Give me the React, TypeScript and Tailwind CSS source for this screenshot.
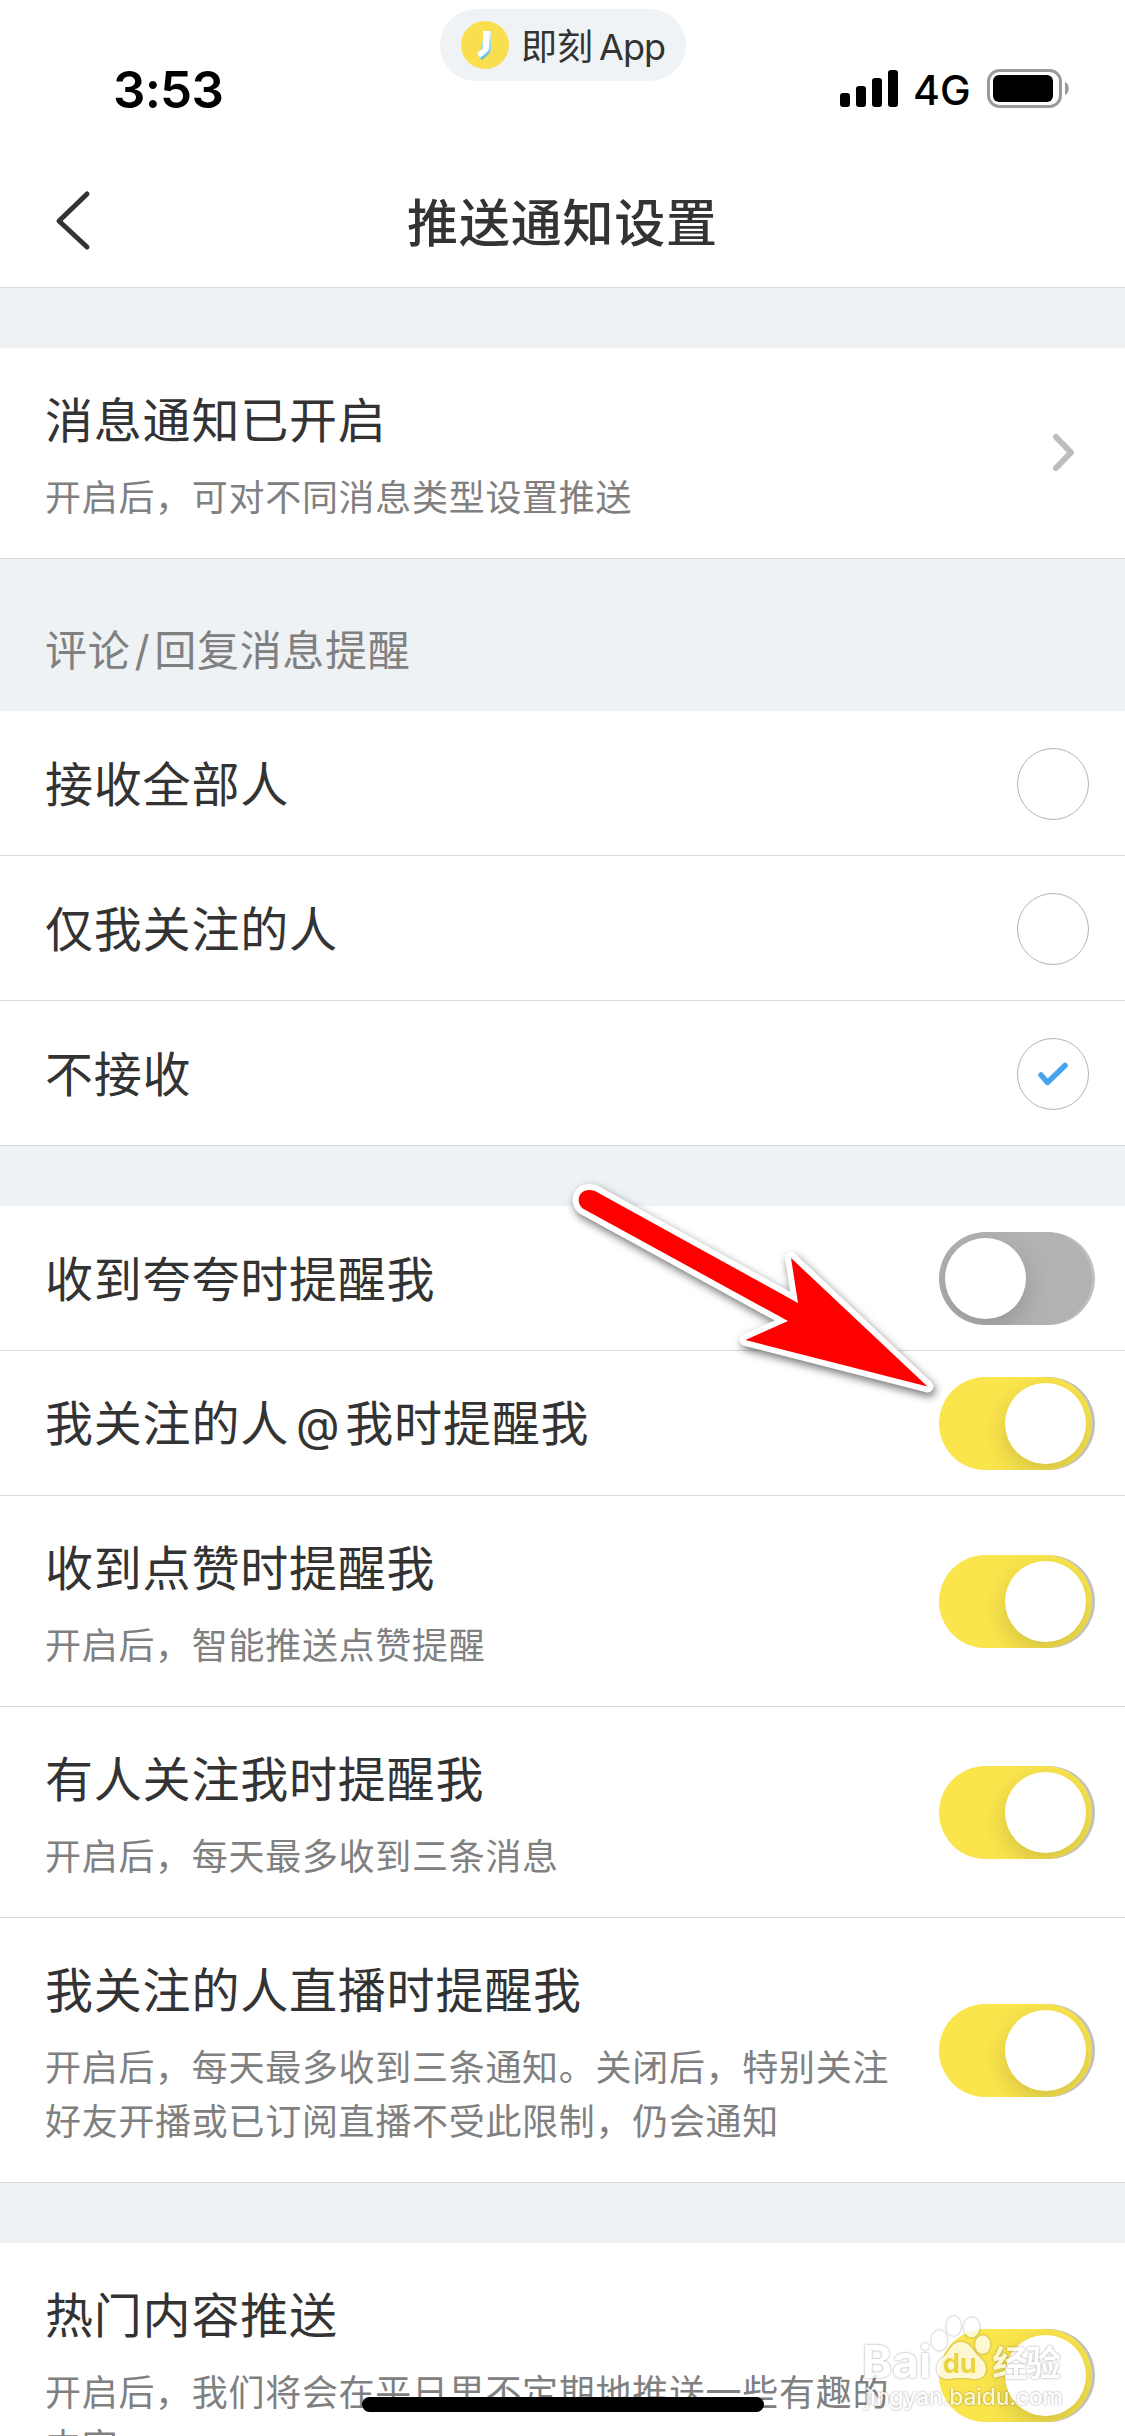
import type { ReactNode } from "react";

function StatusBar() {
  return (
    <div className="relative flex h-[156px] items-start justify-between pl-[113px] pr-[56px]">
      <span className="mt-[59px] text-[51px] font-semibold leading-[62px] tracking-[-0.8px] text-black">3:53</span>
      <div className="absolute left-[440px] top-[9px] flex h-[72px] w-[246px] items-center rounded-full bg-[#eff3f6] pl-[21px]">
        <svg width="48" height="48" viewBox="0 0 48 48">
          <defs>
            <linearGradient id="edge" x1="0" y1="0" x2="0" y2="1">
              <stop offset="0" stopColor="#e8f8fa" />
              <stop offset="1" stopColor="#4fbfe0" />
            </linearGradient>
          </defs>
          <circle cx="24" cy="24" r="24" fill="#f9df4d" />
          <path d="M24 10h6v17c0 3-1 5-3 7l-6 5-3-3z" fill="url(#edge)" />
          <path d="M22 10h6v15c0 4-1 5-3 7l-6 5-3-5 4-3c2-1 2-2 2-4z" fill="#fff" />
        </svg>
        <span className="ml-[12px] mt-[3px] flex text-[36px] leading-[52px] text-[#333]">
          即刻
          <span className="ml-[6px] tracking-[-0.9px]">App</span>
        </span>
      </div>
      <div className="mt-[69px] flex h-[39px] items-center">
        <svg width="58" height="39" viewBox="0 0 58 39">
          <rect x="0" y="24" width="10" height="14" rx="3" />
          <rect x="16" y="17" width="10" height="21" rx="3" />
          <rect x="32" y="9" width="10" height="29" rx="3" />
          <rect x="48" y="1" width="10" height="37" rx="3" />
        </svg>
        <span className="ml-[15px] mt-[2px] w-[74px] text-[41px] font-medium leading-[40px] text-black">4G</span>
        <svg width="82" height="39" viewBox="0 0 82 39">
          <rect x="1.5" y="1.5" width="72" height="36" rx="11" fill="none" stroke="#9a9a9a" strokeWidth="3" />
          <rect x="6" y="6" width="60" height="27" rx="6" />
          <path d="M78 13c5 2 5 11 0 13z" fill="#9a9a9a" />
        </svg>
      </div>
    </div>
  );
}

function Header() {
  return (
    <div className="relative flex h-[132px] items-center justify-center border-b border-[#d8d9db] pt-[4px]">
      <svg className="absolute left-[53px] top-[32px]" width="40" height="66" viewBox="0 0 40 66" fill="none">
        <path d="M34 6 6 33 34 59" stroke="#333" strokeWidth="5" strokeLinecap="round" strokeLinejoin="round" />
      </svg>
      <h1 className="text-[51px] font-medium leading-[72px] tracking-[0.8px] text-[#333]">推送通知设置</h1>
    </div>
  );
}

function Toggle({ on }: { on?: boolean }) {
  return (
    <div className="relative h-[93px] w-[156px] shrink-0">
      <div className="absolute inset-y-0 right-0 w-[153px] rounded-full bg-[#c0c0c1]" />
      <div
        className={
          on
            ? "relative flex h-[93px] w-[153px] items-center justify-end overflow-hidden rounded-full bg-[#fae54d] px-[6px]"
            : "relative flex h-[93px] w-[153px] items-center overflow-hidden rounded-full bg-[#b2b2b4] px-[6px]"
        }
      >
        <div className="h-[81px] w-[81px] rounded-full bg-white shadow-[0_9px_24px_rgba(0,0,0,0.16)]" />
      </div>
    </div>
  );
}

function Radio({ checked }: { checked?: boolean }) {
  return (
    <div className="mr-[6px] mt-px flex h-[72px] w-[72px] items-center justify-center rounded-full border border-[#b4b4b4]">
      {checked && (
        <svg width="32" height="26" viewBox="0 0 32 26" fill="none">
          <path d="M4 14l6.500 7.500L28 4.500" stroke="#48a4ee" strokeWidth="5.500" strokeLinecap="round" strokeLinejoin="round" />
        </svg>
      )}
    </div>
  );
}

function Row({ title, children }: { title: ReactNode; children: ReactNode }) {
  return (
    <div className="flex h-[145px] items-center justify-between border-b border-[#d8d9db] bg-white pl-[45px] pr-[30px]">
      <span className="mt-[3px] whitespace-nowrap text-[48px] leading-[66px] tracking-[0.8px] text-[#333]">{title}</span>
      {children}
    </div>
  );
}

function DetailRow({ title, lines, children }: { title: string; lines: string[]; children: ReactNode }) {
  return (
    <div className="flex items-center justify-between border-b border-[#d8d9db] bg-white pl-[45px] pr-[30px]">
      <div className="pb-[33px] pt-[40px]">
        <div className="text-[48px] leading-[66px] tracking-[0.8px] text-[#333]">{title}</div>
        <div className="mt-[17px] text-[36px] leading-[54px] tracking-[0.7px] text-[#808080]">
          {lines.map((l) => (
            <div key={l} className="whitespace-nowrap">{l}</div>
          ))}
        </div>
      </div>
      {children}
    </div>
  );
}

function Arrow() {
  return (
    <svg
      className="absolute left-[560px] top-[1170px] drop-shadow-[2px_4px_4px_rgba(0,0,0,0.55)]"
      width="400"
      height="250"
      viewBox="560 1170 400 250"
    >
      <path
        d="M595 1191 798 1303 791 1258 927.500 1386.500 745.500 1340 788 1321 582.700 1208.500C574 1201 580 1186 595 1191Z"
        fill="red"
        stroke="#fff"
        strokeWidth="12"
        strokeLinejoin="round"
        paintOrder="stroke"
      />
    </svg>
  );
}

function Watermark() {
  return (
    <svg
      className="absolute left-[840px] top-[2300px] opacity-75 drop-shadow-[0_0_1px_rgba(0,0,0,0.5)]"
      width="285"
      height="130"
      viewBox="0 240 855 390"
      fill="#fff"
    >
      <ellipse cx="298" cy="361" rx="24" ry="31" />
      <ellipse cx="341" cy="318" rx="22" ry="30" />
      <ellipse cx="395" cy="322" rx="24" ry="30" />
      <ellipse cx="428" cy="374" rx="23" ry="28" />
      <path d="M362 365c28 0 36 26 52 42 14 12 26 24 24 42-2 22-20 30-40 28-26-4-46-4-70 0-24 2-40-12-38-34 2-18 14-26 26-38 12-14 20-40 46-40z" />
      <g className="font-bold">
        <text x="66" y="474" fontSize="137" textLength="208">Bai</text>
        <text x="308" y="459" fontSize="82" textLength="102" fill="#e8cf3c">du</text>
        <text x="457" y="468" fontSize="106" textLength="206">经验</text>
      </g>
      <text x="74" y="555" fontSize="68" textLength="594" fontWeight="500">jingyan.baidu.com</text>
    </svg>
  );
}

export default function App() {
  return (
    <div className="relative h-[2436px] w-[1125px] overflow-hidden bg-[#eef2f5] font-['Inter','Noto_Sans_CJK_SC',sans-serif]">
      <div className="bg-white">
        <StatusBar />
        <Header />
      </div>
      <div className="mt-[60px]">
        <DetailRow title="消息通知已开启" lines={["开启后，可对不同消息类型设置推送"]}>
          <svg className="mr-[18px]" width="28" height="42" viewBox="0 0 28 42" fill="none">
            <path d="M7 5 22 20.500 7 36" stroke="#bdbdbd" strokeWidth="6" strokeLinecap="round" strokeLinejoin="round" />
          </svg>
        </DetailRow>
      </div>
      <div className="-mt-px flex h-[153px] items-center border-t border-[#d8d9db] bg-[#eef2f5] pl-[45px] pt-[32px]">
        <span className="text-[42px] leading-[60px] tracking-[0.7px] text-[#808080]">
          评论<span className="ml-[4px] mr-[4px]">/</span>回复消息提醒
        </span>
      </div>
      <Row title="接收全部人">
        <Radio />
      </Row>
      <Row title="仅我关注的人">
        <Radio />
      </Row>
      <Row title="不接收">
        <Radio checked />
      </Row>
      <div className="mt-[60px]">
        <Row title="收到夸夸时提醒我">
          <Toggle />
        </Row>
        <Row
          title={
            <>
              我关注的人<span className="ml-[7px] mr-[5px] text-[45px]">@</span>我时提醒我
            </>
          }
        >
          <Toggle on />
        </Row>
        <DetailRow title="收到点赞时提醒我" lines={["开启后，智能推送点赞提醒"]}>
          <Toggle on />
        </DetailRow>
        <DetailRow title="有人关注我时提醒我" lines={["开启后，每天最多收到三条消息"]}>
          <Toggle on />
        </DetailRow>
        <DetailRow
          title="我关注的人直播时提醒我"
          lines={["开启后，每天最多收到三条通知。关闭后，特别关注", "好友开播或已订阅直播不受此限制，仍会通知"]}
        >
          <Toggle on />
        </DetailRow>
      </div>
      <div className="mt-[60px]">
        <DetailRow title="热门内容推送" lines={["开启后，我们将会在平日里不定期地推送一些有趣的", "内容"]}>
          <div className="-mt-[54px]">
            <div className="mt-[54px]">
              <Toggle on />
            </div>
          </div>
        </DetailRow>
      </div>
      <Arrow />
      <Watermark />
      <div className="absolute bottom-[24px] left-[362px] h-[15px] w-[402px] rounded-full bg-black" />
    </div>
  );
}
